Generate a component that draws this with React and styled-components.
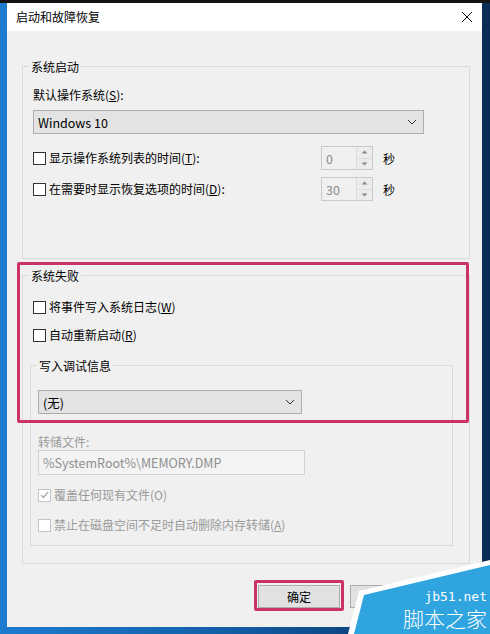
import React from 'react';
import styled, { createGlobalStyle } from 'styled-components';

const Global = createGlobalStyle`
  html, body { margin: 0; padding: 0; }
  body {
    width: 490px;
    height: 634px;
    overflow: hidden;
    background: linear-gradient(90deg, #1e7bd0 0%, #135fa8 45%, #0c3f78 80%, #0a2c55 100%);
    font-family: "Noto Sans CJK SC", "Noto Sans", sans-serif;
    font-size: 12px;
    color: #000;
  }
`;

const Page = styled.div`
  position: relative;
  width: 490px;
  height: 634px;
`;

const TopBand = styled.div`
  height: 3px;
  background: #141414;
`;

const Dialog = styled.div`
  margin-left: 7px;
  width: 475px;
  height: 624px;
  background: #f0f0f0;
  display: flex;
  flex-direction: column;
`;

const TitleBar = styled.div`
  height: 28px;
  background: #fff;
  display: flex;
  align-items: center;
  justify-content: space-between;
  padding: 0 9px;
  line-height: 16px;
`;

const Body = styled.div`
  padding: 0 12px 0 15px;
`;

const Group = styled.div`
  border: 1px solid #dadada;
  box-sizing: border-box;
  height: ${p => p.$h}px;
  margin-top: ${p => p.$top || 0}px;
  margin-left: ${p => p.$left || 0}px;
  width: ${p => (p.$w ? `${p.$w}px` : 'auto')};
`;

const Legend = styled.div`
  width: fit-content;
  margin: -8px 0 0 6px;
  padding: 0 2px;
  background: #f0f0f0;
  line-height: 16px;
`;

const Label = styled.div`
  line-height: 16px;
  margin-top: ${p => p.$top ?? 0}px;
  margin-left: ${p => p.$left ?? 10}px;
  color: ${p => (p.$disabled ? '#9a9a9a' : '#000')};
`;

const U = styled.span`
  text-decoration: underline;
`;

const Select = styled.div`
  box-sizing: border-box;
  height: 24px;
  width: ${p => p.$w}px;
  margin-top: ${p => p.$top ?? 0}px;
  margin-left: ${p => p.$left ?? 10}px;
  background: #e3e3e3;
  border: 1px solid #adadad;
  display: flex;
  align-items: center;
  justify-content: space-between;
  padding: 0 6px 0 4px;
  font-size: 12.5px;
`;

const Input = styled.div`
  box-sizing: border-box;
  height: 25px;
  width: 267px;
  margin-left: 7px;
  border: 1px solid #d2d2d2;
  background: #f3f3f3;
  color: #8f8f8f;
  display: flex;
  align-items: center;
  padding-left: 4px;
  font-size: 12.5px;
`;

const CheckRow = styled.div`
  display: flex;
  align-items: center;
  gap: 3px;
  line-height: 16px;
  margin-top: ${p => p.$top ?? 0}px;
  margin-left: ${p => p.$left ?? 10}px;
  color: ${p => (p.$disabled ? '#9a9a9a' : '#000')};
`;

const Box = styled.span`
  box-sizing: border-box;
  width: 13px;
  height: 13px;
  border: 1px solid ${p => (p.$disabled ? '#c4c4c4' : '#333')};
  background: #fff;
  display: flex;
  align-items: center;
  justify-content: center;
`;

const TimeRow = styled.div`
  display: grid;
  grid-template-columns: 278px 52px auto;
  column-gap: 10px;
  align-items: center;
  margin-top: ${p => p.$top}px;
  margin-left: 10px;
`;

const Spinner = styled.div`
  box-sizing: border-box;
  height: 24px;
  border: 1px solid #cacaca;
  display: flex;
  color: #8c8c8c;
  font-size: 12.5px;
`;

const SpinValue = styled.div`
  flex: 1;
  display: flex;
  align-items: center;
  padding-left: 4px;
`;

const SpinArrows = styled.div`
  width: 15px;
  border-left: 1px solid #dcdcdc;
  display: flex;
  flex-direction: column;
  background: #ececec;
`;

const SpinHalf = styled.div`
  flex: 1;
  display: flex;
  align-items: center;
  justify-content: center;
  border-top: ${p => (p.$down ? '1px solid #dcdcdc' : 'none')};
`;

const Footer = styled.div`
  display: flex;
  justify-content: flex-end;
  gap: 10px;
  margin-top: 21px;
  padding-right: 50px;
`;

const Button = styled.div`
  box-sizing: border-box;
  width: 82px;
  height: 23px;
  border: 1px solid #adadad;
  background: #e1e1e1;
  display: flex;
  align-items: center;
  justify-content: center;
`;

const Mark = styled.div`
  position: absolute;
  left: ${p => p.$x}px;
  top: ${p => p.$y}px;
  width: ${p => p.$w}px;
  height: ${p => p.$h}px;
  box-sizing: border-box;
  border: 3px solid #c9336a;
  border-radius: 2px;
`;

const Watermark = styled.div`
  position: absolute;
  right: 0;
  bottom: 0;
  width: 142px;
  height: 74px;
`;

const WmText = styled.div`
  position: absolute;
  right: ${p => p.$r}px;
  top: ${p => p.$t}px;
  color: #fff;
  white-space: nowrap;
  font-family: ${p => (p.$mono ? '"DejaVu Sans Mono", monospace' : '"Noto Sans CJK SC", sans-serif')};
  font-size: ${p => p.$size}px;
  line-height: ${p => (p.$mono ? 12 : 20)}px;
  font-weight: ${p => (p.$mono ? 400 : 300)};
`;

const Chevron = () => (
  <svg width="10" height="6" viewBox="0 0 10 6">
    <path d="M1 1 L5 5 L9 1" fill="none" stroke="#333" strokeWidth="1" />
  </svg>
);

const Tri = ({ down }) => (
  <svg width="7" height="4" viewBox="0 0 7 4">
    <path d={down ? 'M0.5 0.5 L6.5 0.5 L3.5 3.5 Z' : 'M0.5 3.5 L6.5 3.5 L3.5 0.5 Z'} fill="#8a8a8a" />
  </svg>
);

const Check = ({ disabled, checked, children, top, left }) => (
  <CheckRow $top={top} $left={left} $disabled={disabled}>
    <Box $disabled={disabled}>
      {checked && (
        <svg width="9" height="8" viewBox="0 0 9 8">
          <path d="M1 4 L3.5 6.5 L8 1" fill="none" stroke="#a8a8a8" strokeWidth="1.2" />
        </svg>
      )}
    </Box>
    <span>{children}</span>
  </CheckRow>
);

const Spin = ({ value }) => (
  <Spinner>
    <SpinValue>{value}</SpinValue>
    <SpinArrows>
      <SpinHalf><Tri /></SpinHalf>
      <SpinHalf $down><Tri down /></SpinHalf>
    </SpinArrows>
  </Spinner>
);

export default function App() {
  return (
    <Page>
      <Global />
      <TopBand />
      <Dialog>
        <TitleBar>
          <span>启动和故障恢复</span>
          <svg width="12" height="12" viewBox="0 0 12 12">
            <path d="M1 1 L11 11 M11 1 L1 11" stroke="#111" strokeWidth="1" />
          </svg>
        </TitleBar>
        <Body>
          <Group $h={193} $top={35}>
            <Legend>系统启动</Legend>
            <Label $top={12}>默认操作系统(<U>S</U>):</Label>
            <Select $w={391} $top={7}>
              <span>Windows 10</span>
              <Chevron />
            </Select>
            <TimeRow $top={12}>
              <Check left={0}>显示操作系统列表的时间(<U>T</U>):</Check>
              <Spin value="0" />
              <span>秒</span>
            </TimeRow>
            <TimeRow $top={7}>
              <Check left={0}>在需要时显示恢复选项的时间(<U>D</U>):</Check>
              <Spin value="30" />
              <span>秒</span>
            </TimeRow>
          </Group>
          <Group $h={289} $top={16}>
            <Legend>系统失败</Legend>
            <Check top={15}>将事件写入系统日志(<U>W</U>)</Check>
            <Check top={12}>自动重新启动(<U>R</U>)</Check>
            <Group $h={181} $top={22} $left={7} $w={423}>
              <Legend>写入调试信息</Legend>
              <Select $w={264} $top={16} $left={7}>
                <span>(无)</span>
                <Chevron />
              </Select>
              <Label $top={20} $left={7} $disabled>转储文件:</Label>
              <Input>%SystemRoot%\MEMORY.DMP</Input>
              <Check top={12} left={7} disabled checked>覆盖任何现有文件(O)</Check>
              <Check top={14} left={7} disabled>禁止在磁盘空间不足时自动删除内存转储(<U>A</U>)</Check>
            </Group>
          </Group>
        </Body>
        <Footer>
          <Button>确定</Button>
          <Button>取消</Button>
        </Footer>
      </Dialog>

      <Mark $x={17} $y={262} $w={452} $h={161} />
      <Mark $x={254} $y={580} $w={90} $h={31} />

      <Watermark>
        <svg width="142" height="74" viewBox="0 0 142 74" style={{ position: 'absolute', left: 0, top: 0 }}>
          <polygon points="0,74 11,31 142,0 142,74" fill="#ffffff" />
          <polygon points="6,74 16,35 142,5 142,74" fill="#2fa4df" />
        </svg>
        <WmText $mono $size={13} $r={3} $t={31}>jb51.net</WmText>
        <WmText $size={21} $r={3} $t={48}>脚本之家</WmText>
      </Watermark>
    </Page>
  );
}
